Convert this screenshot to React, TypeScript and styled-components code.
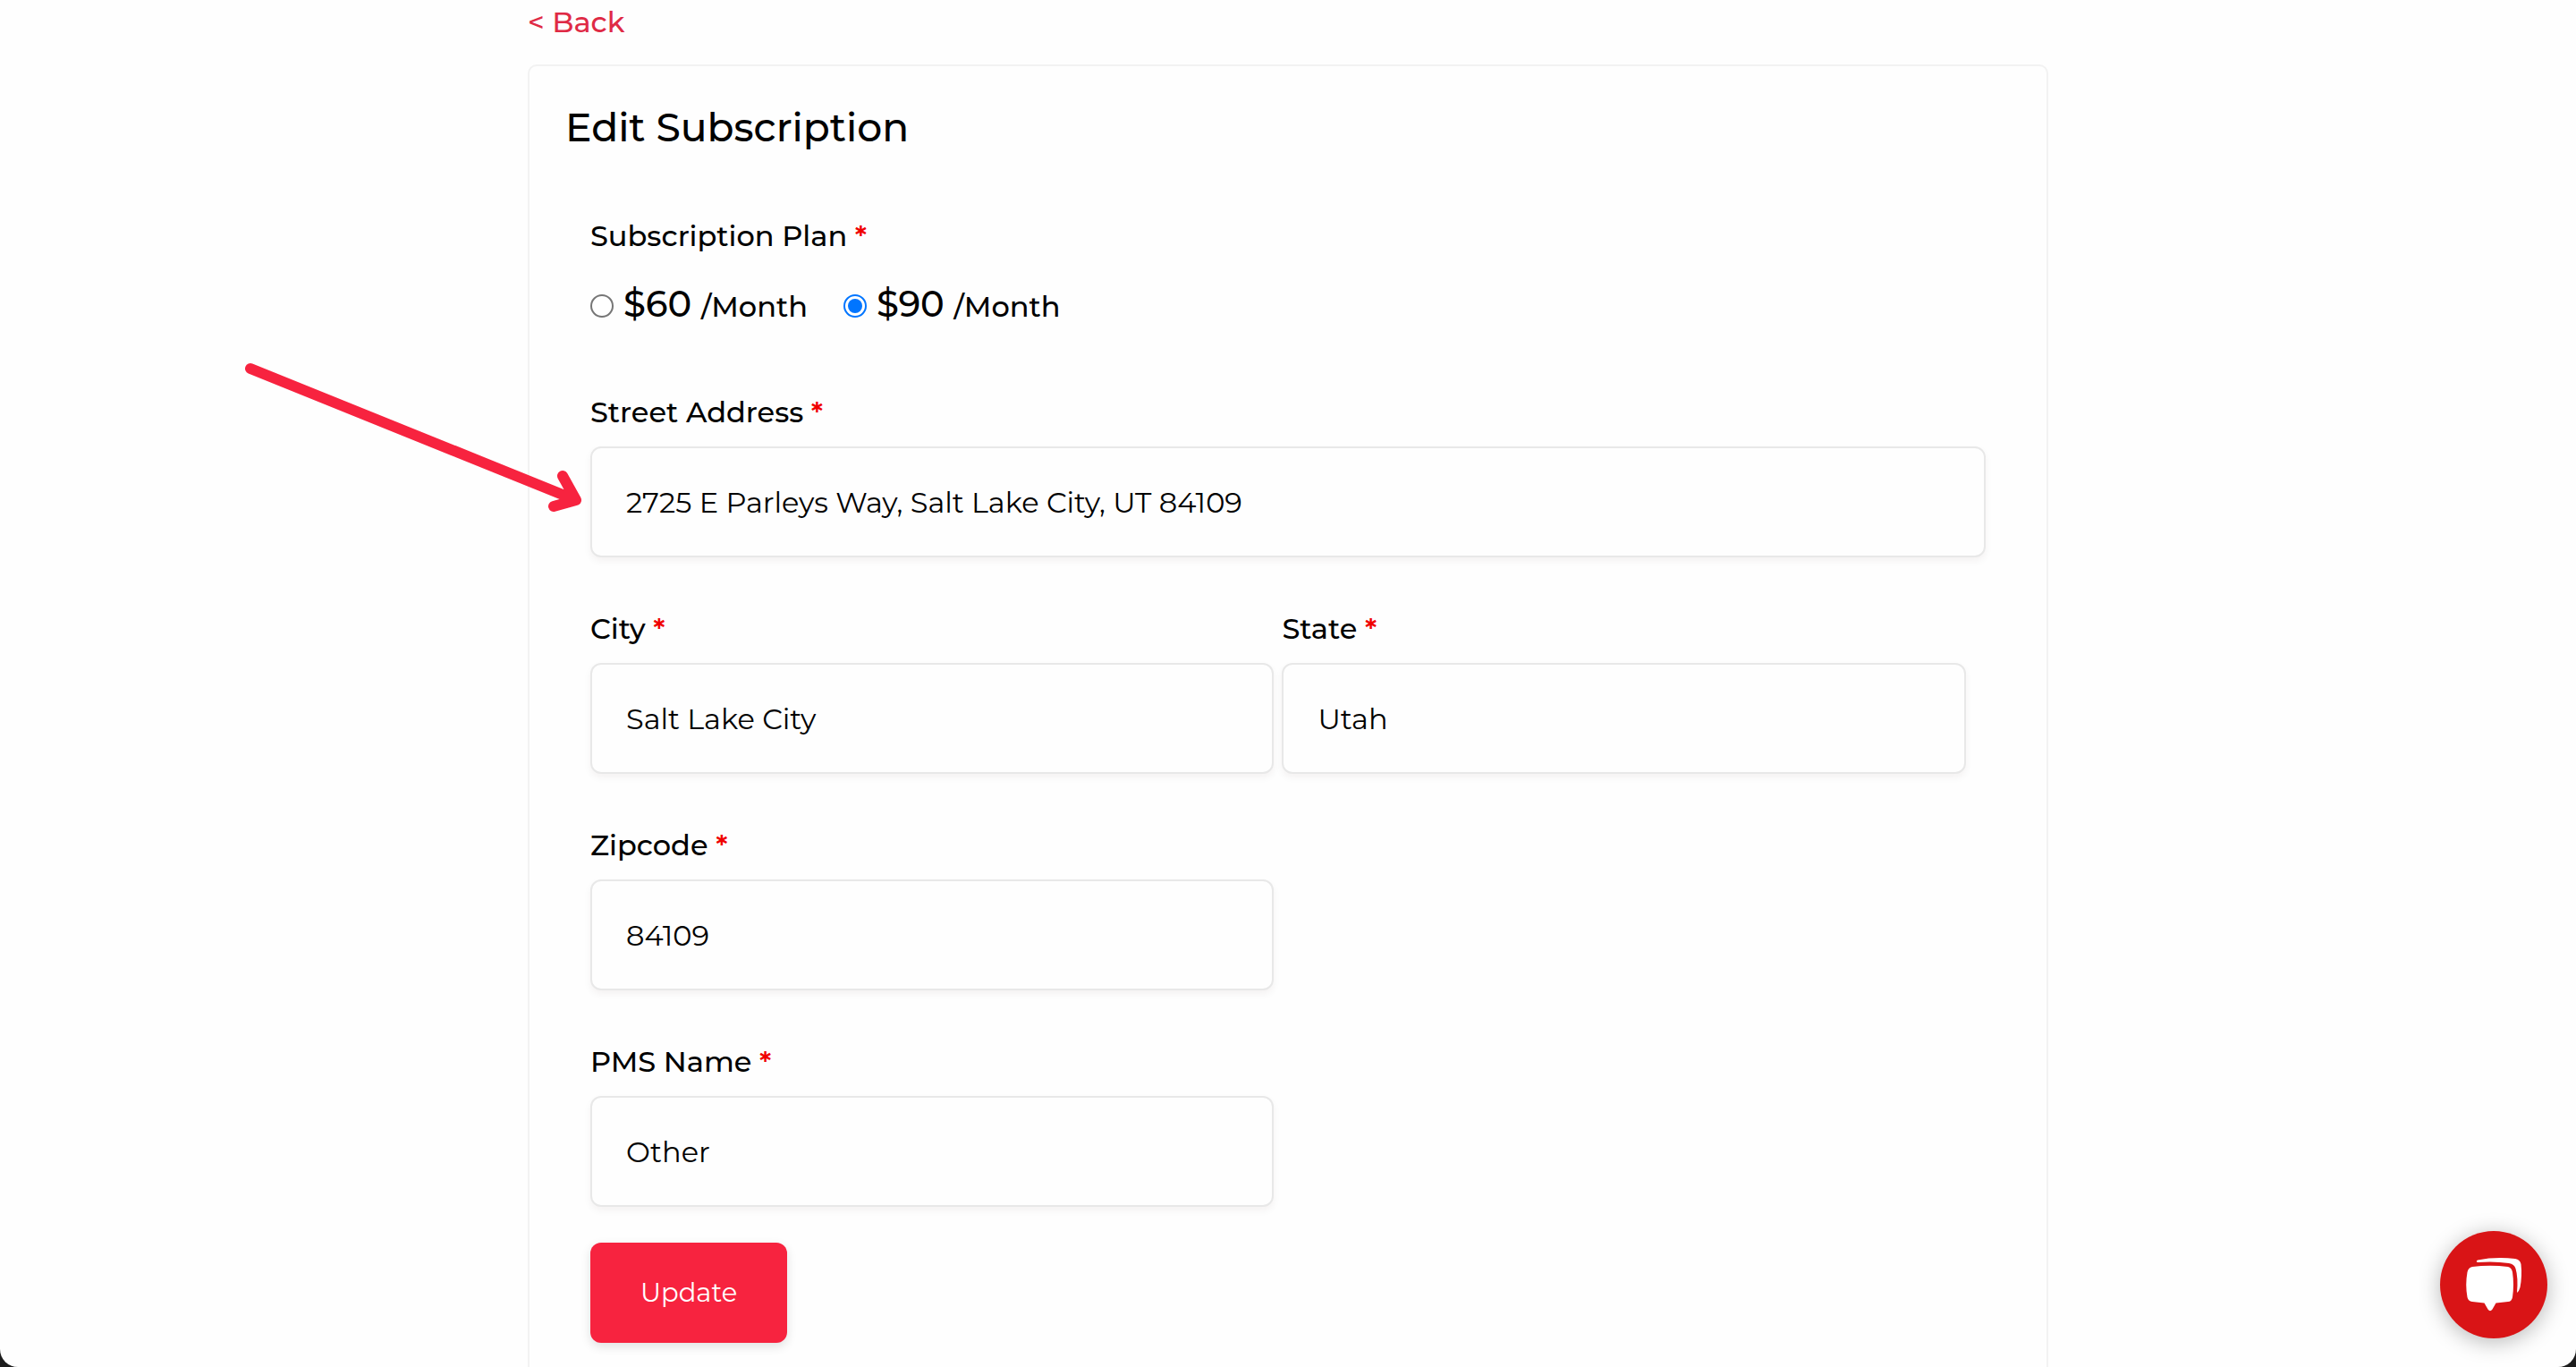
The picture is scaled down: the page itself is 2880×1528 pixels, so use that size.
import React, { useState } from "react";
import styled, { createGlobalStyle } from "styled-components";

const GlobalStyle = createGlobalStyle`
  *, *::before, *::after { box-sizing: border-box; }
  body {
    margin: 0;
    background: #1c1c1c;
    color: #000;
    font-family: Montserrat, Inter, "Liberation Sans", sans-serif;
    font-size: 32px;
    line-height: 40px;
  }
`;

const Screen = styled.div`
  height: 100vh;
  overflow-y: auto;
  scrollbar-width: none;
  background: #fefefe;
  border-radius: 0 0 20px 20px;
`;

const Page = styled.main`
  width: 100%;
  max-width: 1700px;
  margin: 0 auto;
  padding: 5px 0 80px;
  display: flex;
  flex-direction: column;
  align-items: flex-start;
  gap: 27px;
`;

const BackLink = styled.a`
  color: #df2a45;
  font-weight: 500;
  text-decoration: none;
`;

const Card = styled.section`
  width: 100%;
  padding: 40px 40px 80px;
  border: 2px solid #f2f2f2;
  border-radius: 10px;
`;

const Title = styled.h1`
  margin: 0;
  font-size: 44px;
  line-height: 56px;
  font-weight: 500;
`;

const Form = styled.form`
  padding: 74px 28px 0;
  display: flex;
  flex-direction: column;
`;

const PlanGroup = styled.fieldset`
  margin: 0 0 74px;
  padding: 0;
  border: 0;
  min-width: 0;
`;

const Legend = styled.legend`
  padding: 0;
  margin-bottom: 32px;
  font-weight: 500;
`;

const Plans = styled.div`
  display: flex;
  gap: 40px;
`;

const PlanOption = styled.label`
  display: flex;
  align-items: center;
  gap: 11px;
  line-height: 48px;
  font-weight: 500;
`;

const Radio = styled.input`
  appearance: none;
  display: grid;
  place-items: center;
  width: 26px;
  height: 26px;
  margin: 0;
  border: 2px solid #767676;
  border-radius: 50%;
  background: #fff;

  &:checked { border-color: #0075ff; }
  &:checked::before {
    content: "";
    width: 16px;
    height: 16px;
    border-radius: 50%;
    background: #0075ff;
  }
`;

const Price = styled.span`
  font-size: 40px;
`;

const Rows = styled.div`
  display: flex;
  flex-direction: column;
  gap: 60px;
`;

const Row = styled.div`
  display: flex;
  gap: 9px;
`;

const FieldBox = styled.div<{ $wide?: boolean }>`
  position: relative;
  width: ${(p) => (p.$wide ? "100%" : "49%")};
  display: flex;
  flex-direction: column;
  gap: 18px;
`;

const FieldLabel = styled.label`
  font-weight: 500;
`;

const Required = styled.span`
  color: #f00000;
  font-weight: 600;
`;

const TextInput = styled.input`
  width: 100%;
  height: 124px;
  padding: 0 38px;
  border: 2px solid #e8e8e8;
  border-radius: 12px;
  background: #fefefe;
  box-shadow: 0 4px 8px rgba(60, 0, 20, 0.05);
  color: #000;
  font: inherit;
  outline: none;
`;

const UpdateButton = styled.button`
  align-self: flex-start;
  margin-top: 40px;
  padding: 36px 56px;
  border: 0;
  border-radius: 12px;
  background: #f7233f;
  box-shadow: 0 4px 12px rgba(0, 0, 0, 0.12);
  color: #fff;
  font: inherit;
  font-size: 29px;
  cursor: pointer;
`;

const Pointer = styled.svg`
  position: absolute;
  right: 100%;
  bottom: 40px;
  margin-right: 8px;
  pointer-events: none;
`;

const ChatButton = styled.button`
  position: fixed;
  right: 32px;
  bottom: 32px;
  width: 120px;
  height: 120px;
  padding: 0;
  border: 0;
  border-radius: 50%;
  background: #d91416;
  box-shadow: 0 4px 24px rgba(0, 0, 0, 0.28);
  cursor: pointer;
`;

type FieldProps = {
  id: string;
  label: string;
  value: string;
  wide?: boolean;
  children?: React.ReactNode;
};

function Field({ id, label, value, wide, children }: FieldProps) {
  return (
    <FieldBox $wide={wide}>
      <FieldLabel htmlFor={id}>
        {label} <Required>*</Required>
      </FieldLabel>
      <TextInput id={id} name={id} type="text" defaultValue={value} required />
      {children}
    </FieldBox>
  );
}

const prices = ["60", "90"];

export default function App() {
  const [plan, setPlan] = useState("90");

  return (
    <>
      <GlobalStyle />
      <Screen>
        <Page>
          <BackLink href="#back">&lt; Back</BackLink>
          <Card>
            <Title>Edit Subscription</Title>
            <Form onSubmit={(e) => e.preventDefault()}>
              <PlanGroup>
                <Legend>
                  Subscription Plan <Required>*</Required>
                </Legend>
                <Plans>
                  {prices.map((price) => (
                    <PlanOption key={price}>
                      <Radio
                        type="radio"
                        name="plan"
                        value={price}
                        checked={plan === price}
                        onChange={() => setPlan(price)}
                      />
                      <span>
                        <Price>${price} </Price>/Month
                      </span>
                    </PlanOption>
                  ))}
                </Plans>
              </PlanGroup>
              <Rows>
                <Row>
                  <Field id="street" label="Street Address" value="2725 E Parleys Way, Salt Lake City, UT 84109" wide>
                    <Pointer width="380" height="180" viewBox="272 402 380 180" fill="none" aria-hidden="true">
                      <path
                        d="M280 411 L644 558 M629 531 L644 558 L619 565"
                        stroke="#f7233f"
                        strokeWidth="12"
                        strokeLinecap="round"
                        strokeLinejoin="round"
                      />
                    </Pointer>
                  </Field>
                </Row>
                <Row>
                  <Field id="city" label="City" value="Salt Lake City" />
                  <Field id="state" label="State" value="Utah" />
                </Row>
                <Row>
                  <Field id="zipcode" label="Zipcode" value="84109" />
                </Row>
                <Row>
                  <Field id="pms" label="PMS Name" value="Other" />
                </Row>
              </Rows>
              <UpdateButton type="submit">Update</UpdateButton>
            </Form>
          </Card>
        </Page>
      </Screen>
      <ChatButton type="button" aria-label="Open chat">
        <svg width="120" height="120" viewBox="0 0 120 120" fill="#fff" aria-hidden="true">
          <path d="M36 40 Q56 37.500 76 40 Q80 41 81 46 Q83 60 81 74 Q80 79 76 79 L62.500 80.500 L58.500 87.500 Q56 91 53.500 87.500 L49.500 80.500 L36 79 Q31.500 78.500 30.500 74 Q28 60 30.500 46 Q31.500 41 36 40 Z" />
          <path d="M42 32.500 Q62 28.500 84 31 Q89.500 32 90.500 37 Q92 50 89.500 63 Q88.500 67 86 69 Q87.500 52 84.500 42 Q83 37 77 36 Q61 33.500 42 35 Q39.500 34 42 32.500 Z" />
        </svg>
      </ChatButton>
    </>
  );
}
